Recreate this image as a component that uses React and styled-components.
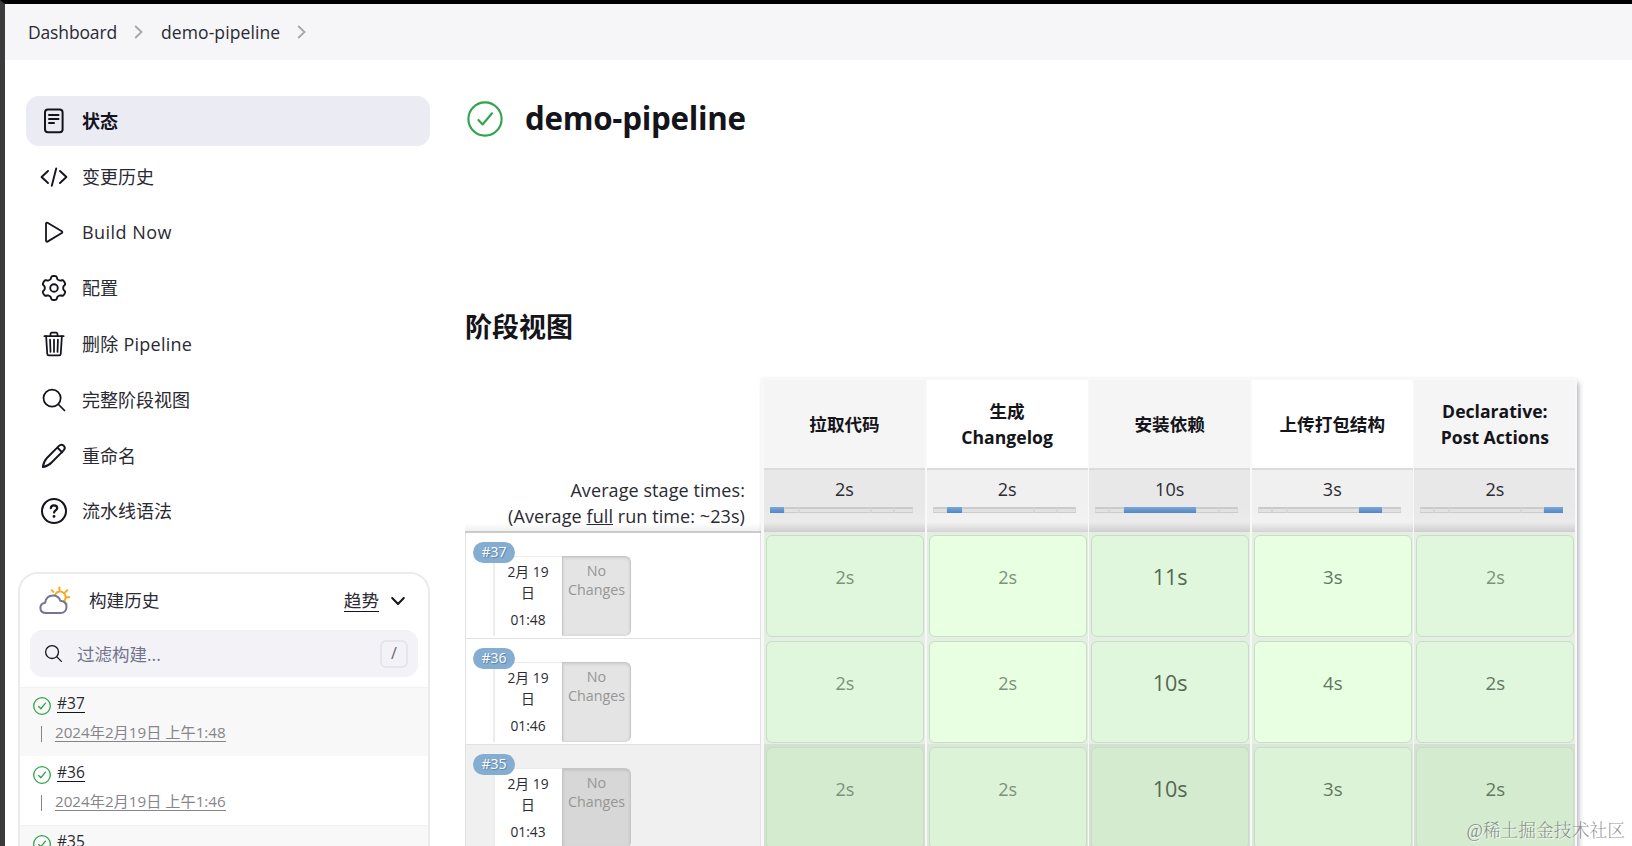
import React from 'react';
import styled, { createGlobalStyle } from "styled-components";
import { IoSearchOutline, IoTrashOutline } from "react-icons/io5";

const GlobalStyle = createGlobalStyle`
  * {
    box-sizing: border-box;
  }
  body {
    margin: 0;
    overflow: hidden;
    background: #fff;
    color: #2a2a33;
    font-family: "Open Sans", "Noto Sans CJK SC", sans-serif;
    font-size: 18px;
    font-weight: 400;
  }
`;

const StyledWindow = styled.div`
  position: relative;
  height: 846px;
  overflow: hidden;
  border-top: 4px solid #000;
  border-left: 5px solid #3b3b3b;
`;

const StyledBreadcrumbs = styled.nav`
  display: flex;
  align-items: center;
  height: 56px;
  padding: 0 0 0 23px;
  background: #f6f6f8;
  font-size: 17.5px;
  svg {
    margin: 0 18px 0 17px;
  }
`;

const StyledCrumb = styled.a`
  letter-spacing: ${({ $spacing }) => $spacing}px;
`;

const StyledPage = styled.div`
  display: flex;
`;

const StyledSidebar = styled.aside`
  width: 425px;
  padding: 36px 0 0 13px;
  flex: none;
`;

const StyledMenu = styled.div`
  display: flex;
  flex-direction: column;
  gap: 6px;
  padding-left: 8px;
`;

const StyledMenuItem = styled.a`
  display: flex;
  align-items: center;
  gap: 14px;
  width: 404px;
  height: 49.8px;
  padding: 0 0 0 14px;
  border-radius: 13px;
  letter-spacing: ${({ $spacing }) => $spacing || 0}px;
  font-weight: ${({ $active }) => ($active ? 700 : 400)};
  color: ${({ $active }) => ($active ? "#14141f" : "inherit")};
  background: ${({ $active }) => ($active ? "#ebebf4" : "transparent")};
  line-height: 24px;
  svg {
    flex: none;
  }
`;

const StyledHistory = styled.section`
  width: 412px;
  height: 400px;
  margin-top: 36px;
  border: 2px solid #ebebef;
  border-radius: 20px;
  overflow: hidden;
`;

const StyledHistoryHead = styled.div`
  display: flex;
  align-items: center;
  height: 56px;
  padding: 0 23px 2px 18px;
  font-size: 17.6px;
  line-height: 24px;
`;

const StyledHistoryTitle = styled.span`
  flex: 1;
  margin: -2px 0 0 17px;
`;

const StyledTrend = styled.a`
  margin-right: 12px;
  border-bottom: 1px solid #14141f;
  line-height: 21px;
`;

const StyledFilter = styled.div`
  display: flex;
  align-items: center;
  height: 47px;
  margin: 0 10px 10px;
  padding: 0 10px 0 13px;
  border-radius: 13px;
  background: #f2f2f7;
  color: #73738c;
  svg {
    color: #14141f;
  }
`;

const StyledFilterText = styled.span`
  flex: 1;
  margin-left: 13px;
  font-size: 17.5px;
`;

const StyledKey = styled.kbd`
  width: 28px;
  height: 28px;
  border: 2px solid #e5e5ed;
  border-radius: 6px;
  font: 400 16px/23px "Open Sans", sans-serif;
  text-align: center;
  color: #666673;
`;

const StyledBuild = styled.div`
  height: 69px;
  padding: 6px 0 0 13px;
  border-top: 1px solid ${({ $odd }) => ($odd ? "#f1f1f4" : "#fff")};
  background: ${({ $odd }) => ($odd ? "#f8f8f8" : "#fff")};
`;

const StyledBuildRow = styled.div`
  display: flex;
  align-items: center;
  height: 24px;
  gap: 6px;
`;

const StyledBuildLink = styled.a`
  border-bottom: 1px solid #14141f;
  font-size: 15.5px;
  line-height: 18px;
  margin-top: -5px;
`;

const StyledBuildDate = styled.div`
  display: flex;
  align-items: center;
  gap: 13px;
  margin: 4px 0 0 8px;
  &:before {
    content: "";
    width: 1px;
    height: 16px;
    margin-top: 4px;
    background: #85858c;
  }
  a {
    border-bottom: 1px solid #85858c;
    color: #85858a;
    font-size: 15.2px;
    line-height: 18px;
  }
`;

const StyledMain = styled.main`
  padding: 36px 0 0 35px;
`;

const StyledTitle = styled.h1`
  display: flex;
  align-items: center;
  gap: 22px;
  height: 44px;
  margin: 0;
  color: #14141a;
  font-size: 31.3px;
  font-weight: 700;
  letter-spacing: -.27px;
  line-height: 42px;
  svg {
    margin: 2px 0 0 2px;
  }
`;

const StyledSubtitle = styled.h2`
  margin: 167px 0 0;
  height: 40px;
  color: #14141a;
  font-size: 27px;
  line-height: 40px;
  font-weight: 700;
`;

const StyledStageView = styled.div`
  display: flex;
  margin-top: 31px;
`;

const StyledRuns = styled.div`
  width: 296px;
  padding-top: 90px;
`;

const StyledAverages = styled.div`
  height: 65px;
  padding: 9px 16px 0 0;
  background: linear-gradient(#fff 88%, #f0f0f0);
  border-bottom: 2px solid #cbcbcb;
  text-align: right;
  font-size: 18px;
  line-height: 26px;
  letter-spacing: .08px;
  white-space: nowrap;
`;

const StyledRun = styled.div`
  position: relative;
  display: flex;
  height: 106px;
  padding: 23px 0 0 27px;
  border: solid #e2e2e2;
  border-width: 0 1px 1px 1px;
  background: ${({ $dark }) => ($dark ? "#f0f0f0" : "#fff")};
`;

const StyledBadge = styled.span`
  position: absolute;
  top: 9px;
  left: 7px;
  width: 42px;
  height: 21px;
  border-radius: 11px;
  background: #85add1;
  color: #fff;
  font-size: 14px;
  line-height: 20px;
  text-align: center;
  text-shadow: 1px 1px 1px #5b7fa0;
`;

const StyledRunDate = styled.div`
  width: 69px;
  height: 80px;
  padding: 4px 1px 0 0;
  border: solid #ececec;
  border-width: 1px 0 0 2px;
  background: #fff;
  font-size: 13.8px;
  line-height: 21px;
  text-align: center;
  div {
    margin-top: 6px;
  }
`;

const StyledChanges = styled.div`
  width: 69px;
  height: 80px;
  padding-top: 4px;
  border: 1px solid #c6c6c6;
  border-bottom-color: #dadada;
  border-radius: 0 6px 6px 0;
  background: ${({ $dark }) => ($dark ? "#d7d7d7" : "#e4e4e4")};
  box-shadow: inset 0 1px 3px rgba(0, 0, 0, .12);
  color: #969696;
  font-size: 14.3px;
  line-height: 19px;
  text-align: center;
`;

const StyledStages = styled.div`
  display: grid;
  grid-template-columns: repeat(5, 161px);
  column-gap: 1.6px;
  padding: 2px 2px 0 3px;
  height: 520px;
  align-content: start;
  background: #f8f8f8;
  box-shadow: 3px 4px 5px -1px rgba(40, 40, 70, .32), 0 0 3px rgba(0, 0, 0, .07);
`;

const StyledStageName = styled.div`
  display: flex;
  align-items: center;
  justify-content: center;
  height: 88px;
  padding: 0 20px 1px;
  background: ${({ $odd }) => ($odd ? "#f5f5f5" : "#fff")};
  color: #14141a;
  font-size: 17.6px;
  line-height: 26px;
  font-weight: 700;
  text-align: center;
  white-space: nowrap;
`;

const StyledStageAverage = styled.div`
  height: 64px;
  padding: 7px 12px 0 6px;
  border-top: 2px solid #dbdbdb;
  background: ${({ $odd }) =>
    $odd
        ? "linear-gradient(#e8e8e8 60%, #ebebeb 84%, #cfcdcf)"
        : "linear-gradient(#f0f0f0 60%, #f2f2f2 84%, #d5d3d5)"};
  line-height: 24px;
  text-align: center;
  span {
    position: relative;
    left: 3px;
  }
`;

const StyledTrack = styled.div`
  display: flex;
  height: 6px;
  margin-top: 6px;
`;

const StyledSegment = styled.i`
  width: ${({ $size }) => $size}px;
  border: 1px solid #cbcbcb;
  border-left-color: #d7d7d7;
  border-right-color: #d7d7d7;
  border-top-width: 2px;
  background: #e2e2e2;
  ${({ $on }) => $on && "border: 0; background: linear-gradient(#78a8dc, #5485c2);"}
`;

const StyledCell = styled.div`
  height: 106px;
  padding: 3px 1px 1px 2px;
  background: ${({ $dark, $odd }) => ($dark ? ($odd ? "#d3e1d2" : "#dbe8d9") : "#e3efe1")};
`;

const cellColor = ({ $dark, $odd }) => {
    if ($dark) return $odd ? "#d5ebd0" : "#ddf3d8";
    return $odd ? "#e1f7dd" : "#e8ffe2";
};

const StyledCellBody = styled.div`
  height: 102px;
  padding-top: 28px;
  border: 1px solid #c8dcc7;
  border-radius: 6px;
  background: ${cellColor};
  color: ${({ $strength }) => ["#7d907b", "#637761", "#556853"][$strength]};
  font-size: ${({ $strength }) => [18, 18.7, 21.5][$strength]}px;
  line-height: 26px;
  text-align: center;
`;

const StyledWatermark = styled.span`
  position: absolute;
  right: 7px;
  bottom: 2px;
  color: rgba(90, 90, 90, .66);
  font: 300 17.8px/26px "Liberation Serif", "Noto Serif CJK SC", "Noto Sans CJK SC", serif;
  text-shadow: 1px 1px 1px rgba(255, 255, 255, .8);
`;

const Svg = ({ size = 28, width = 2, box = 28, children }) => (
    <svg width={size} height={size} viewBox={`0 0 ${box} ${box}`} fill="none" stroke="#14141f"
         strokeWidth={width} strokeLinecap="round" strokeLinejoin="round">{children}</svg>
);

// six rounded teeth around the centre
const gearPoints = Array.from({ length: 120 }, (_, i) => {
    const a = (i / 120) * Math.PI * 2;
    const r = 10.6 + 1.4 * Math.tanh(2.2 * Math.cos(6 * a) + .3);
    return `${(14 + r * Math.sin(a)).toFixed(2)},${(14 - r * Math.cos(a)).toFixed(2)}`;
}).join(" ");

const Chevron = () => (
    <svg width="9" height="14" viewBox="0 0 9 14" fill="none" stroke="#a5a5ad" strokeWidth="1.8">
        <path d="M1.2 1l6.3 6-6.3 6" />
    </svg>
);

const Success = ({ size, width = 1.7 }) => (
    <svg width={size} height={size} viewBox="0 0 36 36" fill="none" stroke="#2ea44b"
         strokeWidth={width} strokeLinecap="round" strokeLinejoin="round">
        <circle cx="18" cy="18" r="16.6" />
        <path d="M11.4 19l4.2 4.5L25 12.3" />
    </svg>
);

const Weather = () => (
    <svg width="34" height="30" viewBox="0 0 34 30" fill="none" strokeWidth="2" strokeLinecap="round" strokeLinejoin="round">
        <path stroke="#f9a825" d="M17.3 8.2a5.6 5.6 0 1 1 8.4 7.2M21.4 1.5v2.2M13.8 4.3l1.6 1.6M29.3 4.3l-1.9 1.8M28.5 11.2h2.8M26.8 16.4l1.8 1.5" />
        <path stroke="#757591" d="M8.4 27c-3.8 0-6-2.1-6-5.1 0-2.9 2-4.7 4.7-5.1.8-4.4 3.9-7.2 8-7.2 3.7 0 6.1 2.1 7.3 5.2 3.8.3 6.1 2.6 6.1 6 0 3.7-2.4 6.2-6.1 6.2z" />
    </svg>
);

const menu = [
    { label: "状态", icon: <Svg><rect x="5" y="2.4" width="17.6" height="22.8" rx="3" /><path d="M9 8h9.5M9 12h9.5M9 16h5" /></Svg> },
    { label: "变更历史", icon: <Svg width={1.9}><path d="M8 8l-6.4 6L8 20M20 8l6.4 6-6.4 6M16.2 5.4l-4.4 17.4" /></Svg> },
    { label: "Build Now", spacing: .45, icon: <Svg width={1.8}><path d="M6 5.7v17c0 .8.8 1.3 1.5.9l14.3-8.5c.7-.4.7-1.4 0-1.8L7.5 4.8C6.8 4.4 6 4.9 6 5.7z" /></Svg> },
    { label: "配置", icon: <Svg width={1.9}><polygon points={gearPoints} /><circle cx="14" cy="14" r="3.8" /></Svg> },
    { label: "删除 Pipeline", spacing: .25, icon: <IoTrashOutline size={28} color="#14141f" /> },
    { label: "完整阶段视图", icon: <IoSearchOutline size={28} color="#14141f" /> },
    { label: "重命名", icon: <Svg width={1.9}><path d="M2.8 25.1c.5-3.4 1.7-6.7 4.1-9.1L18.7 4.1c1.6-1.6 3.6-1.7 5-.4 1.4 1.4 1.2 3.5-.3 5L11.6 20.5c-2.3 2.5-5.3 3.9-8.8 4.6zM17.3 5.5l4.9 4.9" /></Svg> },
    { label: "流水线语法", icon: <Svg><circle cx="14" cy="14" r="12" /><path strokeWidth="2.2" d="M10.8 11.2c.1-1.8 1.4-2.9 3.2-2.9s3.2 1.1 3.2 2.7c0 2.5-3.1 2.4-3.1 4.6" /><path strokeWidth="2.8" d="M14 19.3v.1" /></Svg> },
];

const builds = [
    { id: "#37", time: "1:48" },
    { id: "#36", time: "1:46" },
    { id: "#35", time: "1:43" },
];

const stages = [
    { name: "拉取代码", avg: "2s", cells: [["2s", 0], ["2s", 0], ["2s", 0]] },
    { name: <>生成<br />Changelog</>, avg: "2s", cells: [["2s", 0], ["2s", 0], ["2s", 0]] },
    { name: "安装依赖", avg: "10s", cells: [["11s", 2], ["10s", 2], ["10s", 2]] },
    { name: "上传打包结构", avg: "3s", cells: [["3s", 1], ["4s", 1], ["3s", 1]] },
    { name: <>Declarative:<br />Post Actions</>, avg: "2s", cells: [["2s", 0], ["2s", 1], ["2s", 1]] },
];

// share of the full run taken by each stage, in px of the track
const segments = [14, 15, 72, 23, 19];

const Sidebar = () => (
    <StyledSidebar>
        <StyledMenu>
            {menu.map(({ label, icon, spacing }, i) => (
                <StyledMenuItem key={label} $active={i === 0} $spacing={spacing}>{icon}{label}</StyledMenuItem>
            ))}
        </StyledMenu>
        <StyledHistory>
            <StyledHistoryHead>
                <Weather />
                <StyledHistoryTitle>构建历史</StyledHistoryTitle>
                <StyledTrend>趋势</StyledTrend>
                <Svg size={14} box={14}><path d="M1.2 4l5.8 6 5.8-6" /></Svg>
            </StyledHistoryHead>
            <StyledFilter>
                <IoSearchOutline size={21} />
                <StyledFilterText>过滤构建...</StyledFilterText>
                <StyledKey>/</StyledKey>
            </StyledFilter>
            {builds.map(({ id, time }, i) => (
                <StyledBuild key={id} $odd={i % 2 === 0}>
                    <StyledBuildRow>
                        <Success size={18} width={2.6} />
                        <StyledBuildLink>{id}</StyledBuildLink>
                    </StyledBuildRow>
                    {i < 2 && <StyledBuildDate><a>2024年2月19日 上午{time}</a></StyledBuildDate>}
                </StyledBuild>
            ))}
        </StyledHistory>
    </StyledSidebar>
);

const StageView = () => (
    <StyledStageView>
        <StyledRuns>
            <StyledAverages>
                Average stage times:<br />
                (Average <u>full</u> run time: ~23s)
            </StyledAverages>
            {builds.map(({ id, time }, i) => (
                <StyledRun key={id} $dark={i === 2}>
                    <StyledRunDate>2月 19<br />日<div>0{time}</div></StyledRunDate>
                    <StyledChanges $dark={i === 2}>No<br />Changes</StyledChanges>
                    <StyledBadge>{id}</StyledBadge>
                </StyledRun>
            ))}
        </StyledRuns>
        <StyledStages>
            {stages.map(({ name, avg, cells }, i) => {
                const odd = i % 2 === 0;
                return (
                    <div key={i}>
                        <StyledStageName $odd={odd}><div>{name}</div></StyledStageName>
                        <StyledStageAverage $odd={odd}>
                            <span>{avg}</span>
                            <StyledTrack>
                                {segments.map((size, n) => <StyledSegment key={n} $size={size} $on={n === i} />)}
                            </StyledTrack>
                        </StyledStageAverage>
                        {cells.map(([time, strength], n) => (
                            <StyledCell key={n} $odd={odd} $dark={n === 2}>
                                <StyledCellBody $odd={odd} $dark={n === 2} $strength={strength}>{time}</StyledCellBody>
                            </StyledCell>
                        ))}
                    </div>
                );
            })}
        </StyledStages>
    </StyledStageView>
);

const App = () => (
    <StyledWindow>
        <GlobalStyle />
        <StyledBreadcrumbs>
            <StyledCrumb $spacing={-.15}>Dashboard</StyledCrumb>
            <Chevron />
            <StyledCrumb $spacing={.1}>demo-pipeline</StyledCrumb>
            <Chevron />
        </StyledBreadcrumbs>
        <StyledPage>
            <Sidebar />
            <StyledMain>
                <StyledTitle><Success size={36} width={2.1} />demo-pipeline</StyledTitle>
                <StyledSubtitle>阶段视图</StyledSubtitle>
                <StageView />
            </StyledMain>
        </StyledPage>
        <StyledWatermark>@稀土掘金技术社区</StyledWatermark>
    </StyledWindow>
);

export default App;
